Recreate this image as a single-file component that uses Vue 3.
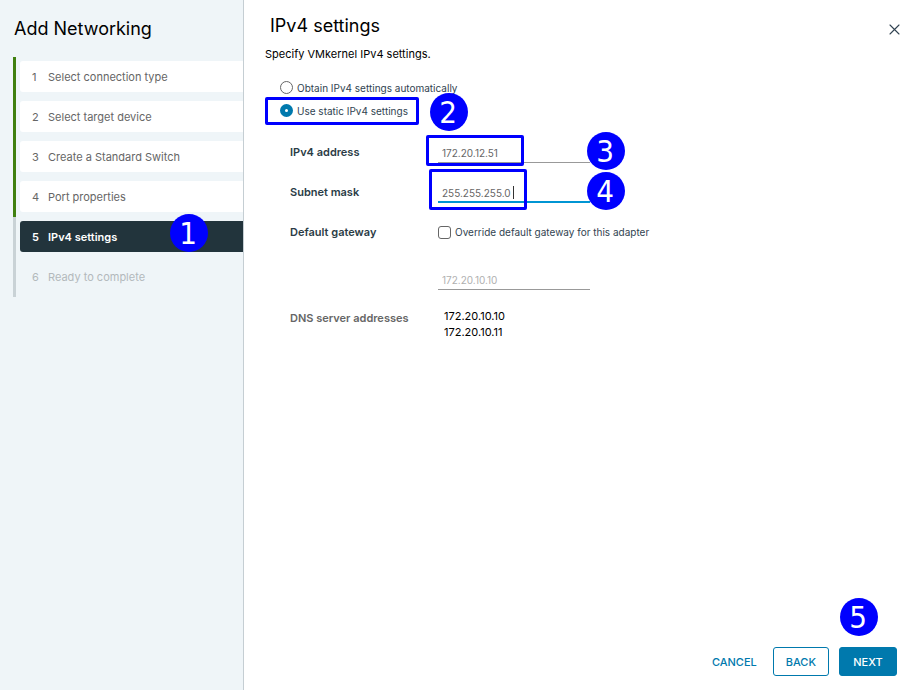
<script setup>
import { ref } from 'vue'

const steps = [
  { label: 'Select connection type', state: 'done' },
  { label: 'Select target device', state: 'done' },
  { label: 'Create a Standard Switch', state: 'done' },
  { label: 'Port properties', state: 'done' },
  { label: 'IPv4 settings', state: 'active', badge: 1 },
  { label: 'Ready to complete', state: 'pending' }
]
const mode = ref('static')
const address = ref('172.20.12.51')
const mask = ref('255.255.255.0')
const gateway = ref('172.20.10.10')
const overrideGateway = ref(false)
const dnsServers = ['172.20.10.10', '172.20.10.11']
</script>

<template>
  <div class="wizard">
    <aside class="sidebar">
      <h1 class="wizard-title">Add Networking</h1>
      <ol class="steps">
        <li v-for="(step, i) in steps" :key="step.label" class="step" :class="step.state">
          <button type="button" class="step-button" :disabled="step.state === 'pending'">
            <span class="step-number">{{ i + 1 }}</span>
            <span>{{ step.label }}</span>
          </button>
          <span v-if="step.badge" class="badge badge-step">{{ step.badge }}</span>
        </li>
      </ol>
    </aside>

    <main class="page">
      <header class="page-header">
        <h2 class="page-title">IPv4 settings</h2>
        <button type="button" class="close" aria-label="Close">
          <svg width="11" height="11" viewBox="0 0 11 11">
            <path d="M1 1L10 10M10 1L1 10" fill="none" stroke="#314351" stroke-width="1.1" stroke-linecap="round" />
          </svg>
        </button>
      </header>
      <p class="description">Specify VMkernel IPv4 settings.</p>

      <div class="modes">
        <label class="choice">
          <input v-model="mode" type="radio" name="mode" value="auto" class="radio" />
          <span>Obtain IPv4 settings automatically</span>
        </label>
        <label class="choice marked">
          <input v-model="mode" type="radio" name="mode" value="static" class="radio" />
          <span>Use static IPv4 settings</span>
          <span class="badge badge-mode">2</span>
        </label>
      </div>

      <div class="form">
        <label class="label" for="address">IPv4 address</label>
        <div class="field marked-address">
          <input id="address" v-model="address" type="text" class="text" />
          <span class="badge badge-field">3</span>
        </div>

        <label class="label" for="mask">Subnet mask</label>
        <div class="field marked-mask">
          <input id="mask" v-model="mask" type="text" class="text current" />
          <span class="caret"></span>
          <span class="badge badge-field">4</span>
        </div>

        <label class="label" for="gateway">Default gateway</label>
        <label class="override">
          <input v-model="overrideGateway" type="checkbox" class="check" />
          <span>Override default gateway for this adapter</span>
        </label>

        <div class="field gateway">
          <input id="gateway" v-model="gateway" type="text" class="text" disabled />
        </div>

        <span class="label muted">DNS server addresses</span>
        <ul class="dns">
          <li v-for="server in dnsServers" :key="server">{{ server }}</li>
        </ul>
      </div>

      <footer class="actions">
        <button type="button" class="button link">CANCEL</button>
        <button type="button" class="button outline">BACK</button>
        <button type="button" class="button primary">
          NEXT
          <span class="badge badge-next">5</span>
        </button>
      </footer>
    </main>
  </div>
</template>

<style>
body {
  background: #fff;
}
</style>

<style scoped>
.wizard {
  display: flex;
  min-height: 100vh;
  font-family: Inter, "Liberation Sans", sans-serif;
  font-size: 11px;
  line-height: 16px;
  color: #000;
}
.wizard *,
.wizard *::before,
.wizard *::after {
  box-sizing: border-box;
}
button,
input {
  font: inherit;
  color: inherit;
}
.sidebar {
  flex: 0 0 244px;
  padding: 17px 0 0 13px;
  background: #eff5f8;
  border-right: 1px solid #c5ced3;
}
.wizard-title {
  margin: 0 0 16px 1px;
  font-size: 18px;
  line-height: 24px;
  font-weight: 400;
}
.steps {
  margin: 0;
  padding: 0;
  list-style: none;
}
.step {
  position: relative;
  padding: 4px 0 5px 4px;
  border-left: 3px solid #408010;
  color: #666;
}
.step.active,
.step.pending {
  border-left-color: #c9d2d6;
}
.step-button {
  display: flex;
  width: 100%;
  height: 31px;
  align-items: center;
  padding: 0 12px;
  border: 0;
  border-radius: 3px 0 0 3px;
  background: #fff;
  text-align: left;
}
.step-number {
  width: 16px;
}
.active .step-button {
  background: #22343c;
  color: #fff;
  font-weight: 600;
}
.pending .step-button {
  background: transparent;
  color: #b3b9bc;
}
.page {
  display: flex;
  flex: 1;
  min-width: 0;
  flex-direction: column;
  padding: 14px 15px 14px 21px;
}
.page-header {
  display: flex;
  justify-content: space-between;
}
.page-title {
  margin: 0 0 0 5px;
  font-size: 18px;
  line-height: 24px;
  font-weight: 400;
}
.close {
  display: flex;
  align-self: flex-end;
  padding: 0 0 3px;
  margin-right: -3px;
  border: 0;
  background: none;
}
.description {
  margin: 8px 0 14px;
}
.modes {
  display: flex;
  flex-direction: column;
  align-items: flex-start;
  padding-left: 15px;
  font-size: 10px;
  color: #314351;
}
.choice {
  position: relative;
  display: flex;
  height: 23px;
  align-items: center;
  gap: 4px;
}
.radio,
.check {
  appearance: none;
  flex: none;
  width: 13px;
  height: 13px;
  margin: 0;
  border: 1px solid #666;
  background: #fff;
}
.radio {
  border-radius: 50%;
}
.radio:checked {
  border: 5px solid #0079ad;
}
.check {
  border-radius: 3px;
}
.form {
  display: grid;
  grid-template-columns: 148px 1fr;
  grid-auto-rows: minmax(40px, auto);
  align-items: center;
  padding: 10px 0 0 25px;
}
.label {
  font-weight: 600;
  color: #2b3c46;
}
.muted {
  color: #666;
}
.field {
  position: relative;
  width: 152px;
}
.text {
  display: block;
  width: 100%;
  height: 22px;
  padding: 2px 4px 0;
  border: 0;
  border-bottom: 1px solid #999;
  border-radius: 0;
  outline: 0;
  background: none;
  font-size: 10px;
  color: #666;
}
.text.current {
  padding-top: 4px;
  border-bottom: 2px solid #0095d3;
}
.text:disabled {
  color: #b0b0b0;
}
.caret {
  position: absolute;
  top: 5px;
  left: 75px;
  width: 1px;
  height: 13px;
  background: #333;
}
.override {
  display: flex;
  align-items: center;
  gap: 4px;
  font-size: 10px;
  color: #314351;
}
.gateway {
  grid-column: 2;
  margin: 16px 0 8px;
}
.muted,
.dns {
  align-self: start;
}
.muted {
  padding-top: 12px;
}
.dns {
  margin: 0;
  padding: 10px 0 0 6px;
  list-style: none;
}
.actions {
  display: flex;
  justify-content: flex-end;
  gap: 10px;
  margin-top: auto;
}
.button {
  position: relative;
  height: 29px;
  padding: 0 12px;
  border: 1px solid #0079ad;
  border-radius: 3px;
  background: #fff;
  font-weight: 500;
  color: #0079ad;
}
.button.link {
  padding: 0 5px;
  border-color: transparent;
}
.button.primary {
  min-width: 58px;
  background: #0079ad;
  color: #fff;
}

/* Numbered callouts and frames laid over the controls */
.badge {
  position: absolute;
  z-index: 2;
  width: 38px;
  height: 38px;
  padding-right: 2px;
  border-radius: 50%;
  background: #0000fe;
  font-family: "DejaVu Sans Condensed", "DejaVu Sans", sans-serif;
  font-size: 31px;
  line-height: 38px;
  font-weight: 400;
  text-align: center;
  color: #fff;
}
.badge-step {
  top: -3px;
  left: 154px;
}
.badge-mode {
  top: -6px;
  left: 150px;
}
.badge-field {
  top: -9px;
  left: 149px;
}
.badge-next {
  top: -50px;
  left: 0;
}
.marked::after,
.marked-address::after,
.marked-mask::after {
  position: absolute;
  z-index: 1;
  border: 3px solid #0000fe;
  border-radius: 2px;
  content: "";
  pointer-events: none;
}
.marked::after {
  top: -2px;
  left: -15px;
  width: 154px;
  height: 28px;
}
.marked-address::after {
  top: -6px;
  left: -12px;
  width: 98px;
  height: 31px;
}
.marked-mask::after {
  top: -12px;
  left: -9px;
  width: 98px;
  height: 41px;
}
</style>
